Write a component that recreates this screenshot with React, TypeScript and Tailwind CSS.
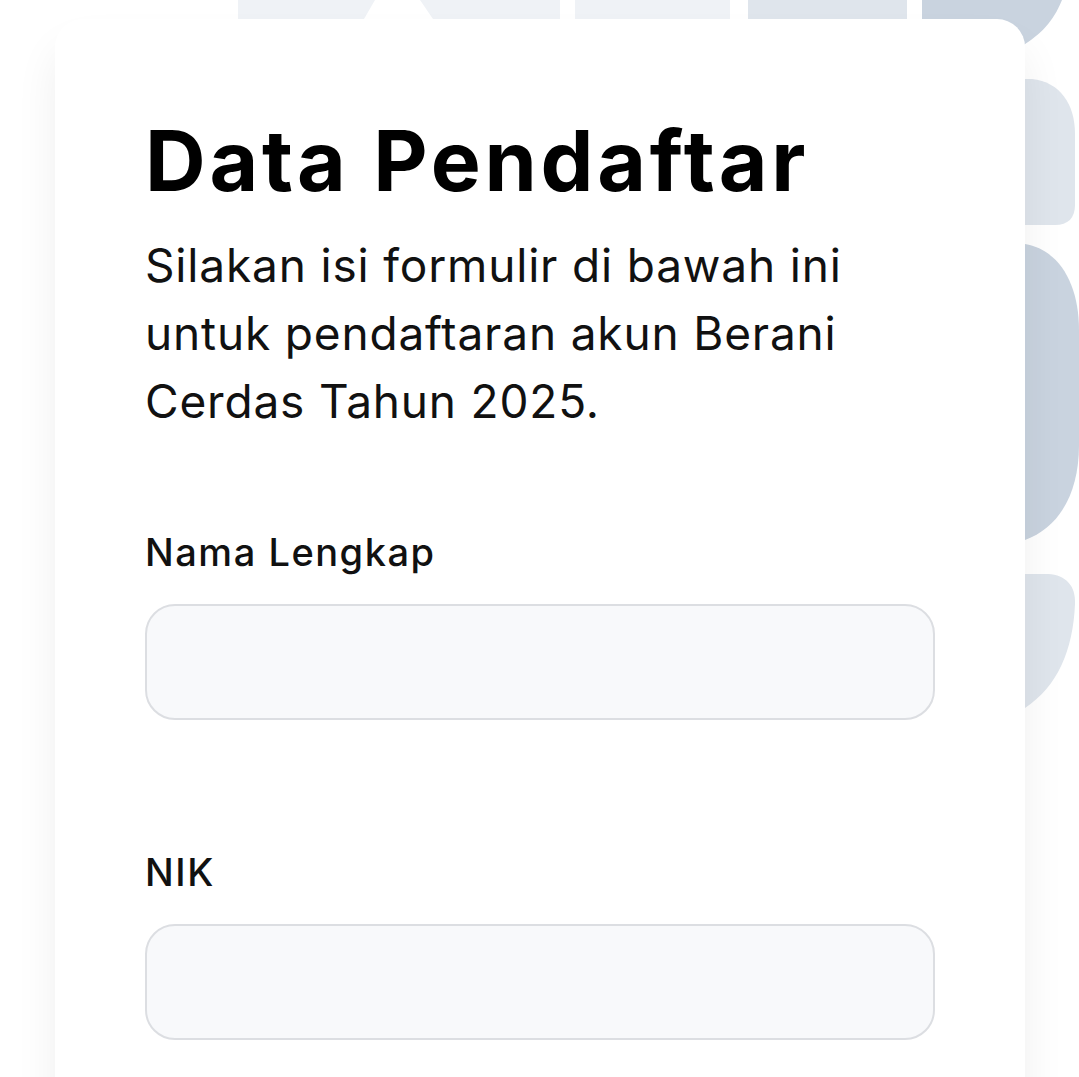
import React from "react";

const FONT = { fontFamily: "Inter, 'Noto Sans', sans-serif" };

function Backdrop() {
  // faint logo pattern peeking out behind the card
  return (
    <svg
      className="absolute top-0 left-0 pointer-events-none"
      width={1079}
      height={760}
      viewBox="0 0 1079 760"
    >
      <path d="M238 0 H375 L364 19 H238 Z" fill="#eff2f6" />
      <path d="M420 0 H560 V19 H433 Z" fill="#eff2f6" />
      <rect x={575} y={0} width={155} height={19} fill="#eff2f6" />
      <rect x={748} y={0} width={159} height={19} fill="#dfe5ec" />
      <path d="M922 0 H1062 C1053 22 1041 34 1022 46 L922 46 Z" fill="#c9d3df" />
      <path d="M1025 79 H1032 C1060 82 1075 104 1075 134 V205 C1075 218 1068 225 1055 225 H1025 Z" fill="#dfe5ec" />
      <path d="M1025 244 C1060 250 1079 285 1079 330 V445 C1079 495 1058 528 1025 540 Z" fill="#c9d3df" />
      <path d="M1025 574 H1048 C1066 575 1076 586 1075 604 C1073 650 1058 686 1025 708 Z" fill="#dfe5ec" />
    </svg>
  );
}

function Field({ label }: { label: string }) {
  return (
    <div className="flex flex-col">
      <label className="text-[38px] leading-[54px] font-medium tracking-[0.04em] text-[#111]">
        {label}
      </label>
      <input
        type="text"
        className="mt-[25px] h-[116px] w-full rounded-[30px] border-2 border-[#dcdee2] bg-[#f8f9fb] px-8 text-[36px] outline-none"
      />
    </div>
  );
}

export default function App() {
  return (
    <div className="relative min-h-screen h-[1077px] overflow-hidden bg-white" style={FONT}>
      <Backdrop />
      <div className="relative pt-[19px] pl-[55px] pr-[54px]">
        <div className="rounded-[28px] bg-white shadow-[0_28px_44px_rgba(0,0,0,0.065)] px-[90px] pt-[100px] pb-40">
          <h1 className="text-[84px] leading-none font-bold tracking-[0.045em] text-black">
            Data Pendaftar
          </h1>
          <p className="mt-[28px] text-[46px] leading-[68px] tracking-[0.018em] text-[#111]">
            Silakan isi formulir di bawah ini
            <br />
            untuk pendaftaran akun Berani
            <br />
            Cerdas Tahun 2025.
          </p>
          <div className="mt-[90px] flex flex-col gap-[125px]">
            <Field label="Nama Lengkap" />
            <Field label="NIK" />
          </div>
        </div>
      </div>
    </div>
  );
}
